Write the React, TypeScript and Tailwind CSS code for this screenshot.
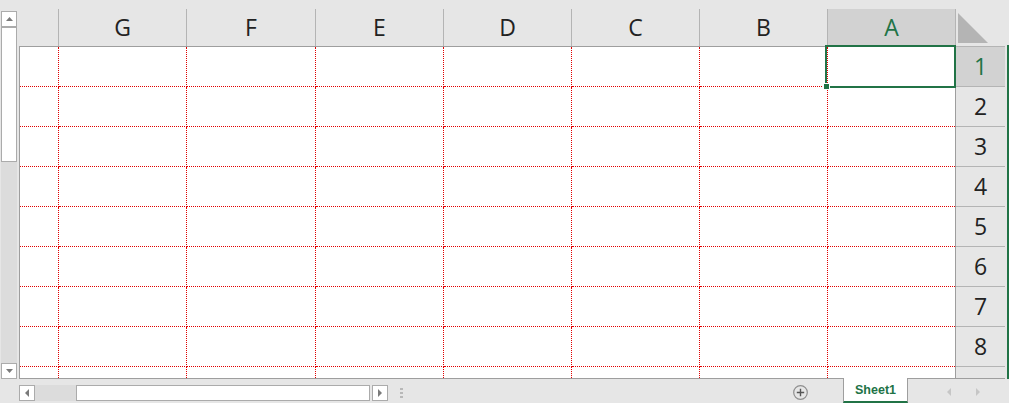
import React from "react";

const GREEN = "#217346";

const COLS = [
  { label: "", w: "w-[40px]", bw: "w-[39px]" },
  { label: "G", w: "w-[128px]", bw: "w-[128px]" },
  { label: "F", w: "w-[129px]", bw: "w-[129px]" },
  { label: "E", w: "w-[128px]", bw: "w-[128px]" },
  { label: "D", w: "w-[128px]", bw: "w-[128px]" },
  { label: "C", w: "w-[128px]", bw: "w-[128px]" },
  { label: "B", w: "w-[128px]", bw: "w-[128px]" },
  { label: "A", w: "w-[127px]", bw: "w-[127px]" },
];

const ROWS = [1, 2, 3, 4, 5, 6, 7, 8];

function Tri({ dir, color = "#7a7a7a" }: { dir: "up" | "down" | "left" | "right"; color?: string }) {
  const pts = {
    up: "0,4 7,4 3.5,0",
    down: "0,0 7,0 3.5,4",
    left: "4,0 4,8 0,4",
    right: "0,0 0,8 4,4",
  }[dir];
  const vert = dir === "up" || dir === "down";
  return (
    <svg width={vert ? 7 : 4} height={vert ? 4 : 8} viewBox={vert ? "0 0 7 4" : "0 0 4 8"}>
      <polygon points={pts} fill={color} />
    </svg>
  );
}

function ScrollBtn({ dir }: { dir: "up" | "down" | "left" | "right" }) {
  return (
    <div className="w-[16px] h-[16px] bg-white border border-[#ababab] flex items-center justify-center shrink-0">
      <Tri dir={dir} />
    </div>
  );
}

export default function App() {
  return (
    <div className="w-[1009px] h-[403px] bg-[#e6e6e6] overflow-hidden font-['Open_Sans',sans-serif] select-none">
      {/* top area */}
      <div className="relative flex h-[379px]">
        {/* vertical scrollbar */}
        <div className="w-[19px] pt-[11px] flex flex-col pl-[1px]">
          <ScrollBtn dir="up" />
          <div className="w-[16px] h-[135px] bg-white border border-[#ababab]" />
          <div className="w-[16px] h-[201px] bg-[#dcdcdc]" />
          <ScrollBtn dir="down" />
        </div>

        {/* grid */}
        <div className="w-[936px] flex flex-col">
          <div className="h-[47px] pt-[9px] flex border-b border-[#9e9e9e]">
            {COLS.map((c, i) => (
              <div
                key={i}
                className={`${c.w} h-[37px] flex items-center justify-center text-[23px] ${
                  i < COLS.length - 1 ? "border-r border-[#b4b4b4]" : ""
                } ${c.label === "A" ? "bg-[#d2d2d2] text-[#217346]" : "text-[#222222]"}`}
              >
                {c.label}
              </div>
            ))}
          </div>
          <div className="bg-white border-l border-b border-[#9e9e9e] flex flex-col">
            {ROWS.map((r) => (
              <div key={r} className="flex h-[40px]">
                {COLS.map((c, i) => (
                  <div
                    key={i}
                    className={`${c.bw} h-[40px] border-dotted border-[#e00000] border-b ${
                      i < COLS.length - 1 ? "border-r" : ""
                    }`}
                  />
                ))}
              </div>
            ))}
            <div className="flex h-[11px]">
              {COLS.map((c, i) => (
                <div
                  key={i}
                  className={`${c.bw} h-[11px] border-dotted border-[#e00000] ${
                    i < COLS.length - 1 ? "border-r" : ""
                  }`}
                />
              ))}
            </div>
          </div>
        </div>

        {/* row headers */}
        <div className="w-[50px] flex flex-col">
          <div className="h-[47px] pt-[9px]">
            <div className="h-[38px] border-l border-b border-[#b4b4b4] pl-[2px] pt-[4px]">
              <svg width="30" height="30" viewBox="0 0 30 30">
                <polygon points="0,0 0,30 30,30" fill="#b4b4b4" />
              </svg>
            </div>
          </div>
          <div className="border-l border-b border-[#9e9e9e] flex flex-col">
            {ROWS.map((r) => (
              <div
                key={r}
                className={`h-[40px] border-b border-[#b4b4b4] flex items-center justify-center text-[23px] ${
                  r === 1 ? "bg-[#d2d2d2] text-[#217346]" : "text-[#222222]"
                }`}
              >
                {r}
              </div>
            ))}
            <div className="h-[11px]" />
          </div>
        </div>

        <div className="w-[2px]" />
        <div className="w-[2px] mt-[45px] h-[334px] bg-[#217346]" />

        {/* active cell */}
        <div className="absolute left-[825px] top-[45px] w-[131px] h-[43px] border-2 border-[#217346]" />
        <div className="absolute left-[824px] top-[84px] w-[5px] h-[5px] bg-[#217346] outline outline-1 outline-white" />
      </div>

      {/* bottom bar */}
      <div className="h-[24px] flex items-start pl-[19px]">
        <div className="mt-[6px] flex">
          <ScrollBtn dir="left" />
          <div className="w-[41px] h-[16px] bg-[#dcdcdc]" />
          <div className="w-[294px] h-[16px] bg-white border border-[#ababab]" />
          <div className="w-[2px] h-[16px]" />
          <ScrollBtn dir="right" />
        </div>
        <div className="ml-[12px] mt-[9px] flex flex-col gap-[2px]">
          <div className="w-[3px] h-[2px] bg-[#b8b8b8]" />
          <div className="w-[3px] h-[2px] bg-[#b8b8b8]" />
          <div className="w-[3px] h-[2px] bg-[#b8b8b8]" />
        </div>
        <div className="flex-1" />
        <div className="mt-[6px] mr-[35px]">
          <svg width="15" height="15" viewBox="0 0 15 15">
            <circle cx="7.5" cy="7.5" r="6.8" fill="none" stroke="#8e8e8e" strokeWidth="1.2" />
            <path d="M7.5 3.8v7.4M3.8 7.5h7.4" stroke="#555555" strokeWidth="1.4" />
          </svg>
        </div>
        <div className="relative z-10 -mt-px w-[65px] h-[25px] bg-white border-l border-r border-[#9e9e9e] border-b-2 border-b-[#217346] flex items-center justify-center">
          <span className="text-[12.5px] font-bold text-[#217346] font-['Liberation_Sans',sans-serif] pt-[1px]">
            Sheet1
          </span>
        </div>
        <div className="w-[101px] flex items-center h-[24px] pl-[39px] gap-[25px] pt-[1px]">
          <Tri dir="left" color="#c6c6c6" />
          <Tri dir="right" color="#c6c6c6" />
        </div>
      </div>
    </div>
  );
}
